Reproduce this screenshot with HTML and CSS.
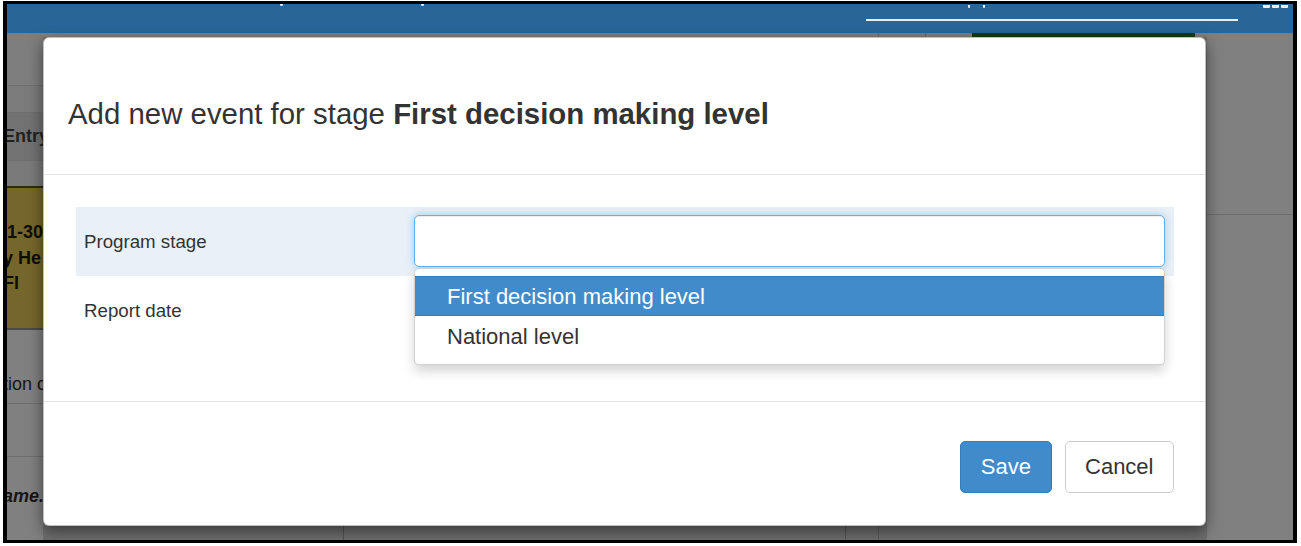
FILE: index.html
```html
<!DOCTYPE html>
<html lang="en">
<head>
<meta charset="utf-8">
<title>Add new event</title>
<link rel="stylesheet" href="styles.css">
</head>
<body>
<div class="frame">
  <div class="page">
    <header class="navbar">
      <span class="tick tick-a"></span>
      <span class="tick tick-b"></span>
      <div class="nav-search">
        <div class="nav-search-top"><span class="tick"></span><span class="tick tick-c"></span></div>
      </div>
      <div class="nav-menu"><span></span><span></span><span></span></div>
    </header>
    <main class="content">
      <aside class="side-left">
        <div class="lrow r1"></div>
        <div class="lrow r2"></div>
        <div class="lrow r3"><span class="cut">Entry</span></div>
        <div class="lrow r4"></div>
        <div class="lrow r5"><span>1-30</span><span class="cut">y He</span><span class="cut">FI</span></div>
        <div class="lrow r6"><span class="cut">tion c</span></div>
        <div class="lrow r7"></div>
        <div class="lrow r8"><em class="cut">ame.</em></div>
      </aside>
      <section class="center">
        <div class="center-top">
          <div class="ct c1"></div><div class="ct c2"></div><div class="ct c3"></div><div class="ct green"></div><div class="ct c5"></div>
        </div>
        <div class="center-cols">
          <div class="cc w1"></div><div class="cc w2"></div><div class="cc w3"></div><div class="cc w4"></div>
        </div>
      </section>
      <aside class="side-right">
        <div class="rrow rr1"></div>
        <div class="rrow rr2"></div>
      </aside>
    </main>
  </div>

  <div class="modal">
    <div class="modal-header">
      <h4 class="modal-title">Add new event for stage <strong>First decision making level</strong></h4>
    </div>
    <div class="modal-body">
      <div class="form-row active">
        <label class="form-label">Program stage</label>
        <div class="field">
          <input type="text" class="form-control focus">
          <ul class="dropdown">
            <li class="item selected">First decision making level</li>
            <li class="item">National level</li>
          </ul>
        </div>
      </div>
      <div class="form-row">
        <label class="form-label">Report date</label>
        <div class="field">
          <input type="text" class="form-control">
        </div>
      </div>
    </div>
    <div class="modal-footer">
      <button class="btn btn-primary">Save</button>
      <button class="btn btn-default">Cancel</button>
    </div>
  </div>
</div>
</body>
</html>
```

FILE: styles.css
```css
* { box-sizing: border-box; }
html, body { margin: 0; padding: 0; background: #fff; }
body { font-family: "Liberation Sans", Arial, Helvetica, sans-serif; color: #333; }

.frame {
  position: relative;
  margin: 1px 4px 3px 3px;
  height: 542px;
  border-style: solid;
  border-color: #000;
  border-width: 3px 4px 3px 4px;
  overflow: hidden;
}

.page { display: flex; flex-direction: column; height: 100%; }

/* navbar */
.navbar {
  height: 29px;
  flex: none;
  background: #296697;
  display: flex;
  align-items: flex-start;
}
.tick { display: block; width: 3px; height: 2px; background: #e8eef4; border-radius: 0 0 2px 2px; }
.tick-a { margin-left: 273px; }
.tick-b { margin-left: 138px; }
.nav-search {
  margin-left: 442px;
  width: 372px;
  height: 17px;
  border-bottom: 2px solid #e6eef5;
}
.nav-search-top { display: flex; padding-left: 102px; padding-top: 1px; }
.nav-search-top .tick { height: 3px; width: 2px; }
.tick-c { margin-left: 13px; }
.nav-menu { margin-left: 25px; display: flex; gap: 2px; padding-top: 1px; }
.nav-menu span { display: block; width: 7px; height: 3px; background: #e8eef4; border-radius: 0 0 1px 1px; }

/* background content (behind backdrop) */
.content { flex: 1; display: flex; background: #808080; }

.side-left { width: 36px; flex: none; display: flex; flex-direction: column; overflow: hidden; }
.lrow { border-bottom: 1px solid #6f6f6f; font-size: 18px; color: #161616; white-space: nowrap; display: flex; flex-direction: column; }
.cut { margin-left: -4px; }
.r1 { height: 53px; background: #7e7e7e; }
.r2 { height: 27px; background: #7b7b7b; }
.r3 { height: 48px; background: #727272; justify-content: center; font-weight: bold; color: #222; }
.r4 { height: 27px; background: #7a7a7a; border-bottom: 2px solid #2e2a12; }
.r5 { height: 142px; background: #75672b; border-bottom: 2px solid #4a4a4a; padding-top: 32px; font-weight: bold; line-height: 25.5px; color: #0d0d0a; }
.r6 { height: 74px; padding-top: 44px; }
.r7 { height: 53px; }
.r8 { flex: 1; border-bottom: 0; padding-top: 29px; font-weight: bold; }
.r8 em { font-style: italic; }

.center { flex: 1; display: flex; flex-direction: column; }
.center-top { height: 4px; display: flex; }
.ct { height: 4px; }
.c1 { width: 835px; }
.c2 { width: 47px; border-left: 1px solid #6a6a6a; }
.c3 { width: 47px; border-left: 1px solid #6a6a6a; }
.green { width: 223px; background: #113f12; }
.c5 { flex: 1; }
.center-cols { flex: 1; display: flex; background: #6e6e6e; }
.cc { height: 100%; }
.w1 { width: 300px; }
.w2 { width: 502px; border-left: 1px solid #555; }
.w3 { width: 33px; border-left: 1px solid #555; }
.w4 { flex: 1; border-left: 1px solid #5c5c5c; }

.side-right { width: 86px; flex: none; display: flex; flex-direction: column; }
.rrow { border-bottom: 1px solid #6c6c6c; }
.rr1 { height: 182px; }
.rr2 { flex: 1; border-bottom: 0; }

/* modal */
.modal {
  position: absolute;
  left: 36px;
  top: 33px;
  width: 1163px;
  background: #fff;
  border: 1px solid rgba(0, 0, 0, 0.25);
  border-radius: 6px;
  box-shadow: 0 5px 15px rgba(0, 0, 0, 0.5);
  z-index: 5;
}
.modal-header { padding: 59px 24px 44px; border-bottom: 1px solid #e5e5e5; }
.modal-title { margin: 0; font-size: 29.4px; line-height: 33px; font-weight: normal; color: #333; white-space: nowrap; }
.modal-title strong { font-weight: bold; }

.modal-body { padding: 32px 31px 56px 32px; }
.form-row { display: flex; align-items: center; height: 69px; padding: 8px 9px 9px 8px; }
.form-row.active { background: #eaf0f7; }
.form-label { width: 330px; flex: none; font-size: 18.7px; color: #333; padding-top: 1px; }
.field { flex: 1; position: relative; height: 52px; }
.form-control {
  display: block;
  width: 100%;
  height: 52px;
  margin: 0;
  padding: 0 16px;
  font: inherit;
  font-size: 22px;
  color: #555;
  background: #fff;
  border: 1px solid #ccc;
  border-radius: 5px;
  box-shadow: inset 0 1px 1px rgba(0, 0, 0, 0.075);
  outline: none;
}
.form-control.focus {
  border-color: #66afe9;
  box-shadow: inset 0 1px 1px rgba(0, 0, 0, 0.075), 0 0 8px rgba(102, 175, 233, 0.6);
}

.dropdown {
  position: absolute;
  top: 53px;
  left: 0;
  right: 0;
  margin: 0;
  padding: 7px 0 8px;
  list-style: none;
  background: #fff;
  border: 1px solid rgba(0, 0, 0, 0.18);
  border-radius: 5px;
  box-shadow: 0 6px 12px rgba(0, 0, 0, 0.175);
  z-index: 3;
}
.item { height: 40px; line-height: 41px; padding-left: 32px; font-size: 22px; color: #333; white-space: nowrap; }
.item.selected { background: #428bca; color: #fff; border-top: 1px solid #3a7dbb; border-bottom: 1px solid #3a7dbb; line-height: 39px; }

.modal-footer { border-top: 1px solid #e5e5e5; padding: 39px 31px 32px; display: flex; justify-content: flex-end; gap: 13px; }
.btn {
  height: 52px;
  margin: 0;
  padding: 0 19.5px;
  font-family: inherit;
  font-size: 22px;
  border: 1px solid;
  border-radius: 5px;
  cursor: pointer;
}
.btn-primary { background: #428bca; border-color: #357ebd; color: #fff; }
.btn-default { background: #fff; border-color: #ccc; color: #333; }
```
